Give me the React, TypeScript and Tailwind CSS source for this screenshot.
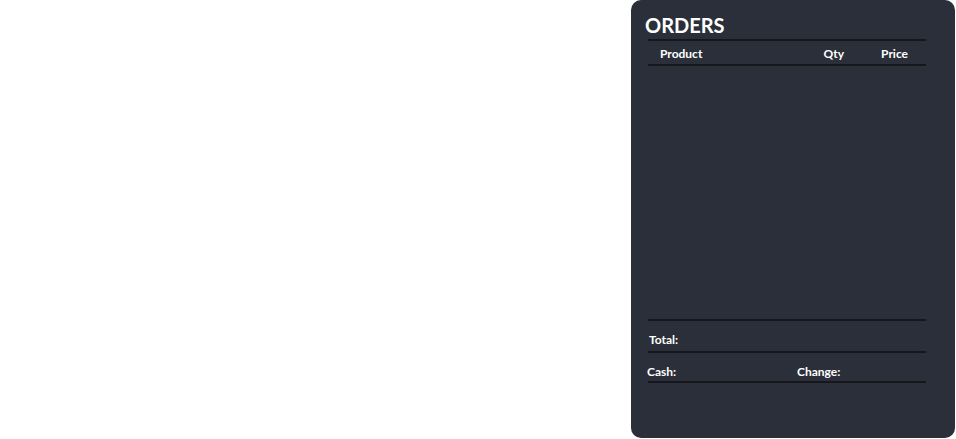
import React from 'react';

type OrderItem = {
  id: number;
  product: string;
  qty: number;
  price: number;
};

const items: OrderItem[] = [];

export default function App() {
  return (
    <div className="flex h-[439px] w-full justify-end bg-white font-['Lato','Liberation_Sans',sans-serif] text-white">
      <aside className="mr-[1px] flex h-[438px] w-[324px] flex-col rounded-[10px] bg-[#2b2f3a] pl-[14px] pr-[29px]">
        {/* タイトル */}
        <h1 className="pt-[11px] text-[20px] font-bold leading-[28px]">ORDERS</h1>

        {/* ヘッダー */}
        <div className="ml-[3px] box-border flex h-[27px] items-center border-y-2 border-[#15171c] pl-[12px] pr-[18px] pt-[2px] text-[12px] font-bold">
          <span className="flex-1">Product</span>
          <span>Qty</span>
          <span className="ml-[37px]">Price</span>
        </div>

        {/* 注文リスト */}
        <div className="ml-[3px] flex-1">
          {items.map((item) => (
            <div key={item.id} className="flex pl-[12px] pr-[18px] text-[12px]">
              <span className="flex-1">{item.product}</span>
              <span>{item.qty}</span>
              <span className="ml-[37px]">{item.price.toFixed(2)}</span>
            </div>
          ))}
        </div>

        {/* 合計 */}
        <div className="ml-[3px] mb-[55px] border-t-2 border-[#15171c] text-[12px] font-bold">
          <div className="box-border flex h-[32px] items-end border-b-2 border-[#15171c] pb-[2px] pl-[1px]">
            Total:
          </div>
          <div className="box-border flex h-[30px] items-end border-b-2 border-[#15171c]">
            <span className="-ml-[1px] w-[150px]">Cash:</span>
            <span>Change:</span>
          </div>
        </div>
      </aside>
    </div>
  );
}
